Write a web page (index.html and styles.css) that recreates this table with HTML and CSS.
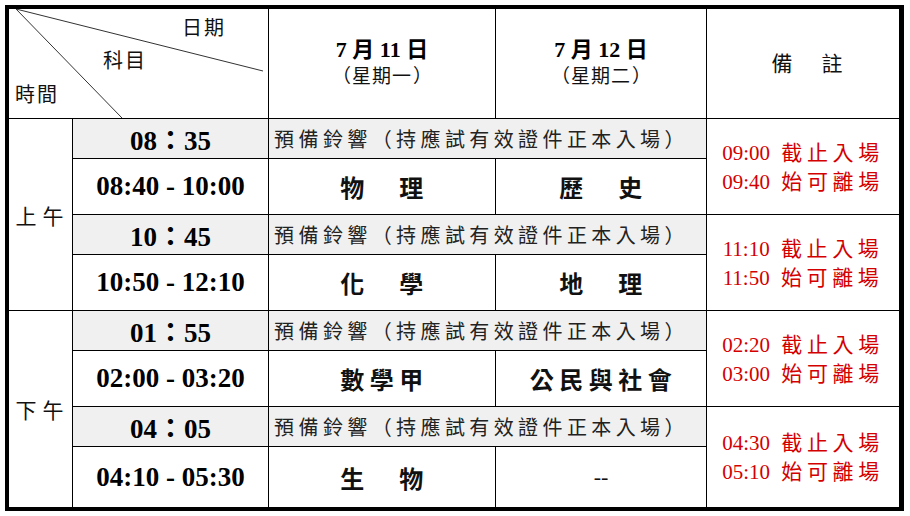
FILE: index.html
```html
<!DOCTYPE html>
<html lang="zh-Hant">
<head>
<meta charset="utf-8">
<title>考試時間表</title>
<link rel="stylesheet" href="styles.css">
</head>
<body>
<div class="sheet">
  <div class="cell diag">
    <svg class="diag-lines" width="259" height="109" viewBox="0 0 259 109">
      <line x1="7" y1="0" x2="254" y2="62" stroke="#333" stroke-width="1"/>
      <line x1="7" y1="0" x2="113" y2="109" stroke="#333" stroke-width="1"/>
    </svg>
    <div class="dlabel d-date">日期</div>
    <div class="dlabel d-subj">科目</div>
    <div class="dlabel d-time">時間</div>
  </div>
  <div class="cell head"><div class="hdate">7 月 11 日</div><div class="hday"><span class="par open">（</span>星期一<span class="par close">）</span></div></div>
  <div class="cell head"><div class="hdate">7 月 12 日</div><div class="hday"><span class="par open">（</span>星期二<span class="par close">）</span></div></div>
  <div class="cell head"><span class="note-title">備　註</span></div>

  <div class="cell period">上午</div>
  <div class="cell time gray">08：35</div>
  <div class="cell bell gray">預備鈴響（持應試有效證件正本入場）</div>
  <div class="cell remark"><div>09:00 <span class="rc">截止入場</span></div><div>09:40 <span class="rc">始可離場</span></div></div>
  <div class="cell time">08:40 - 10:00</div>
  <div class="cell subj">物　理</div>
  <div class="cell subj">歷　史</div>

  <div class="cell time gray">10：45</div>
  <div class="cell bell gray">預備鈴響（持應試有效證件正本入場）</div>
  <div class="cell remark"><div>11:10 <span class="rc">截止入場</span></div><div>11:50 <span class="rc">始可離場</span></div></div>
  <div class="cell time">10:50 - 12:10</div>
  <div class="cell subj">化　學</div>
  <div class="cell subj">地　理</div>

  <div class="cell period">下午</div>
  <div class="cell time gray">01：55</div>
  <div class="cell bell gray">預備鈴響（持應試有效證件正本入場）</div>
  <div class="cell remark"><div>02:20 <span class="rc">截止入場</span></div><div>03:00 <span class="rc">始可離場</span></div></div>
  <div class="cell time">02:00 - 03:20</div>
  <div class="cell subj">數學甲</div>
  <div class="cell subj">公民與社會</div>

  <div class="cell time gray">04：05</div>
  <div class="cell bell gray">預備鈴響（持應試有效證件正本入場）</div>
  <div class="cell remark"><div>04:30 <span class="rc">截止入場</span></div><div>05:10 <span class="rc">始可離場</span></div></div>
  <div class="cell time">04:10 - 05:30</div>
  <div class="cell subj">生　物</div>
  <div class="cell subj dash">--</div>
</div>
</body>
</html>
```

FILE: styles.css
```css
html, body {
  margin: 0;
  padding: 0;
  background: #fff;
}
body {
  font-family: "Liberation Serif", "Noto Sans CJK TC", serif;
  color: #000;
  text-spacing-trim: space-all;
  font-feature-settings: "chws" 0, "halt" 0, "palt" 0;
}
.sheet {
  margin: 5px 0 0 5px;
  display: grid;
  grid-template-columns: 63px 195px 226px 210px 192px;
  grid-template-rows: 109px 39px 55px 39px 55px 39px 55px 39px 60px;
  gap: 1px;
  background: #000;
  padding: 4px 5px 4px 4px;
  width: fit-content;
}
.cell {
  background: #fff;
  display: flex;
  flex-direction: column;
  align-items: center;
  justify-content: center;
  overflow: hidden;
  white-space: nowrap;
}
.gray {
  background: #f0f0f0;
}
.diag {
  grid-column: span 2;
  position: relative;
  align-items: flex-start;
  justify-content: flex-start;
  padding-top: 7px;
  gap: 12px;
  box-sizing: border-box;
}
.diag-lines {
  position: absolute;
  left: 0;
  top: 0;
}
.dlabel {
  font-family: "Noto Sans CJK TC", sans-serif;
  font-size: 20px;
  line-height: 22px;
  letter-spacing: 2px;
  color: #111;
}
.d-date { padding-left: 173px; }
.d-subj { padding-left: 94px; margin-top: -1px; }
.d-time { padding-left: 6px; }

.hdate {
  font-family: "Liberation Serif", "Noto Sans CJK TC", serif;
  font-weight: 700;
  font-size: 22px;
  line-height: 25px;
  margin-top: -4px;
}
.hday {
  font-family: "Noto Sans CJK TC", sans-serif;
  font-size: 19px;
  line-height: 25px;
  letter-spacing: 1px;
  color: #111;
}
.par {
  display: inline-block;
  width: 20px;
  letter-spacing: 0;
}
.par.open { text-align: left; }
.par.close { text-align: right; }
.note-title {
  font-family: "Noto Sans CJK TC", sans-serif;
  font-size: 21px;
  letter-spacing: 4px;
  margin-top: -4px;
  padding-left: 12px;
  color: #111;
}
.period {
  grid-row: span 4;
  font-family: "Noto Sans CJK TC", sans-serif;
  font-size: 21px;
  letter-spacing: 6px;
  padding-left: 4px;
  color: #111;
}
.time {
  font-family: "Liberation Serif", "Noto Sans CJK TC", serif;
  font-weight: 700;
  font-size: 27px;
}
.bell {
  grid-column: span 2;
  font-family: "Noto Sans CJK TC", sans-serif;
  font-size: 20px;
  letter-spacing: 4.4px;
  color: #222;
  padding-right: 12px;
}
.remark {
  grid-row: span 2;
  color: #d40000;
  font-family: "Liberation Serif", "Noto Sans CJK TC", serif;
  font-size: 21px;
  line-height: 27px;
}
.rc {
  font-family: "Noto Sans CJK TC", sans-serif;
  font-size: 21px;
  letter-spacing: 4.6px;
  margin-left: 6px;
}
.subj {
  font-family: "Noto Sans CJK TC", sans-serif;
  font-weight: 700;
  font-size: 24px;
  letter-spacing: 5.5px;
  padding-left: 5px;
  color: #111;
}
.dash {
  font-family: "Liberation Serif", serif;
  font-weight: 400;
  font-size: 22px;
  letter-spacing: 0;
  padding-left: 0;
}
```
